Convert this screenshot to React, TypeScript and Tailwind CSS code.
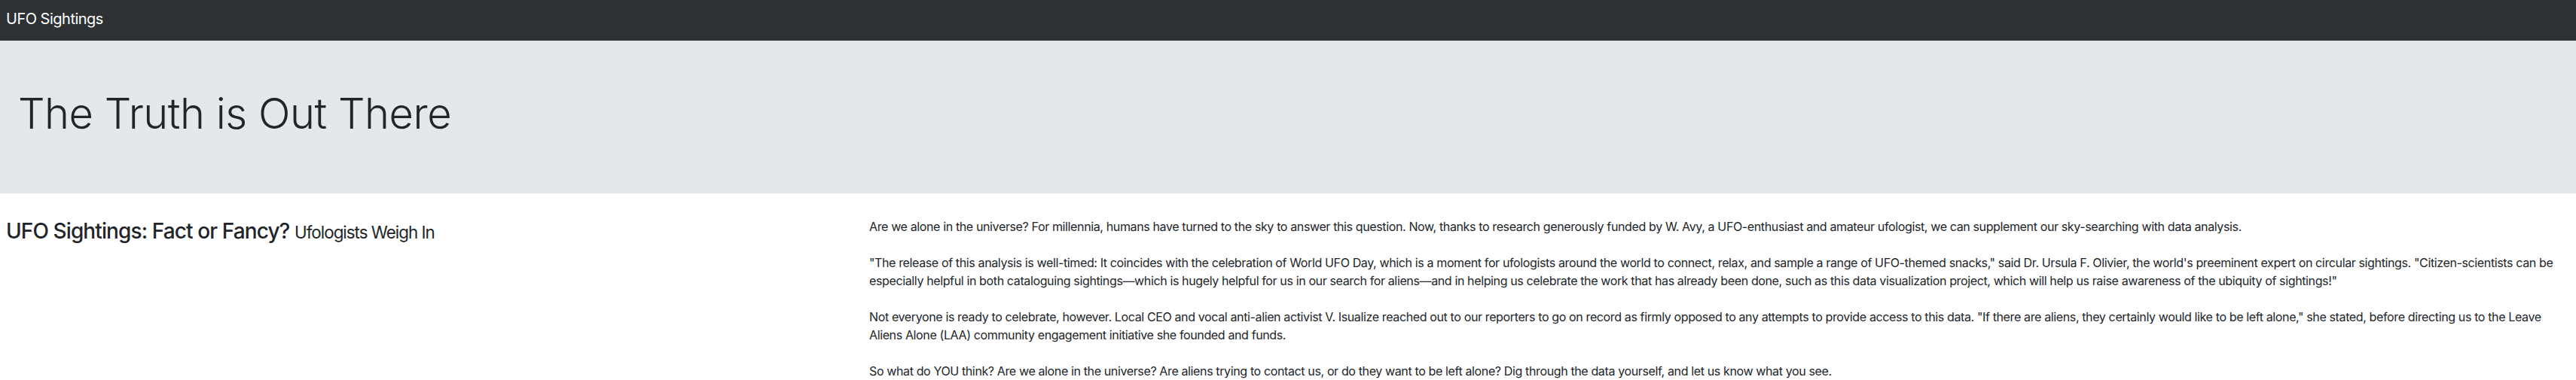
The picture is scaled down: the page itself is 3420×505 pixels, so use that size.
import React from 'react';

const paragraphs: string[] = [
  'Are we alone in the universe? For millennia, humans have turned to the sky to answer this question. Now, thanks to research generously funded by W. Avy, a UFO-enthusiast and amateur ufologist, we can supplement our sky-searching with data analysis.',
  '"The release of this analysis is well-timed: It coincides with the celebration of World UFO Day, which is a moment for ufologists around the world to connect, relax, and sample a range of UFO-themed snacks," said Dr. Ursula F. Olivier, the world\'s preeminent expert on circular sightings. "Citizen-scientists can be especially helpful in both cataloguing sightings\u2014which is hugely helpful for us in our search for aliens\u2014and in helping us celebrate the work that has already been done, such as this data visualization project, which will help us raise awareness of the ubiquity of sightings!"',
  'Not everyone is ready to celebrate, however. Local CEO and vocal anti-alien activist V. Isualize reached out to our reporters to go on record as firmly opposed to any attempts to provide access to this data. "If there are aliens, they certainly would like to be left alone," she stated, before directing us to the Leave Aliens Alone (LAA) community engagement initiative she founded and funds.',
  'So what do YOU think? Are we alone in the universe? Are aliens trying to contact us, or do they want to be left alone? Dig through the data yourself, and let us know what you see.',
];

const App: React.FC = () => {
  return (
    <div className="min-h-screen bg-white text-[#212529] font-['Inter','Noto_Sans',sans-serif]">
      {/* Navbar */}
      <nav className="h-[54px] bg-[#2e3235] pl-2 pt-[10px]">
        <span className="text-[20px] leading-[30px] tracking-[-0.5px] text-white">UFO Sightings</span>
      </nav>

      {/* Jumbotron */}
      <header className="bg-[#e5e8eb] py-16 pl-6 mb-8">
        <h1 className="text-[56px] leading-[1.2] font-light tracking-[-0.5px] mb-[8px]">The Truth is Out There</h1>
      </header>

      {/* Article */}
      <div className="flex">
        <div className="w-1/3 pl-2 pr-3 pt-[2px]">
          <h3 className="text-[28px] leading-[1.2] font-medium tracking-[-0.9px]">
            UFO Sightings: Fact or Fancy?{' '}
            <small className="text-[0.8em] font-normal tracking-[-1px]">Ufologists Weigh In</small>
          </h3>
        </div>
        <div className="w-2/3 pl-[14px] pr-3 text-base leading-6 tracking-[-0.37px] space-y-6">
          {paragraphs.map((p, i) => (
            <p key={i}>{p}</p>
          ))}
        </div>
      </div>
    </div>
  );
};

export default App;
